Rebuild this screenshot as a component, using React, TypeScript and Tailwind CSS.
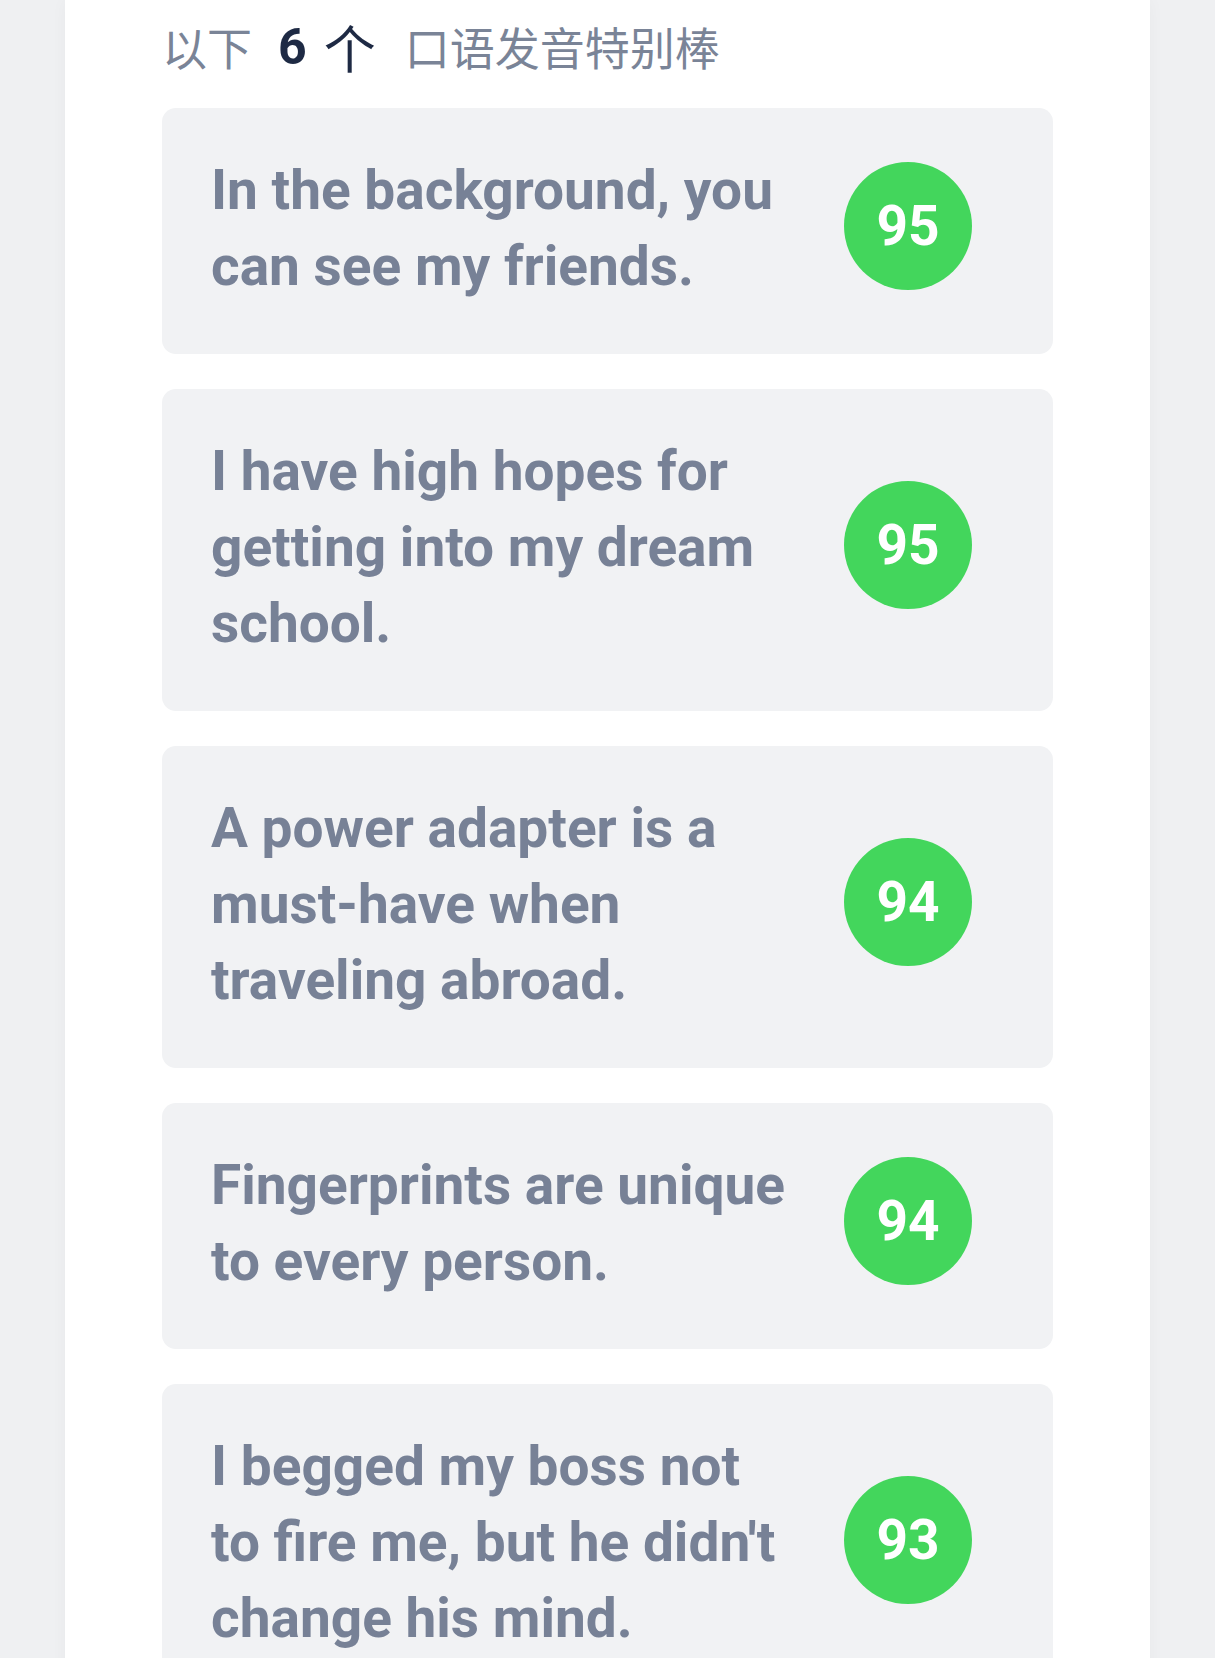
import React from "react";

const items = [
  { text: "In the background, you can see my friends.", score: 95 },
  { text: "I have high hopes for getting into my dream school.", score: 95 },
  { text: "A power adapter is a must-have when traveling abroad.", score: 94 },
  { text: "Fingerprints are unique to every person.", score: 94 },
  { text: "I begged my boss not to fire me, but he didn't change his mind.", score: 93 },
  { text: "Practice makes perfect.", score: 92 },
];

export default function App() {
  return (
    <div
      className="min-h-screen w-full bg-[#eff0f2] px-[65px]"
      style={{ fontFamily: "Roboto, 'Noto Sans CJK SC', sans-serif" }}
    >
      <div className="min-h-screen bg-white px-[97px] pb-16 shadow-[0_0_16px_rgba(0,0,0,0.035)]">
        <div className="flex h-[94px] items-center text-[45px] text-[#7a8497] font-['Noto_Sans_CJK_SC',sans-serif]">
          <span>以下</span>
          <span className="ml-[26px] mr-[17px] font-['Roboto',sans-serif] text-[50px] font-bold text-[#1e2a44]">6</span>
          <span className="mr-[29px] text-[52px] text-[#1e2a44]">个</span>
          <span>口语发音特别棒</span>
        </div>
        <div className="mt-[14px] flex flex-col gap-[35px]">
          {items.map((it, i) => (
            <div
              key={i}
              className="flex items-center rounded-[14px] bg-[#f1f2f4] pt-[44px] pb-[50px] pl-[49px] pr-[81px]"
            >
              <div className="w-[582px] text-[55px] font-bold leading-[76px] text-[#778196]">
                {it.text}
              </div>
              <div className="ml-auto mb-[4px] flex h-[128px] w-[128px] shrink-0 items-center justify-center rounded-full bg-[#43d65c] text-[55px] font-bold text-white">
                {it.score}
              </div>
            </div>
          ))}
        </div>
      </div>
    </div>
  );
}
